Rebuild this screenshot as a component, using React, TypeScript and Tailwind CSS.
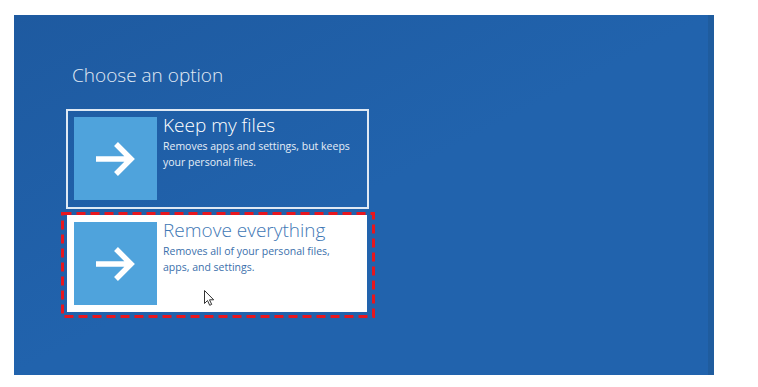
import React from 'react';

function ArrowTile() {
  return (
    <div className="w-[83px] h-[83px] shrink-0 bg-[#4fa3dc] flex items-center justify-center">
      <svg width="42" height="36" viewBox="0 0 42 36" fill="none">
        <path d="M1 18h35M21 3l15 15-15 15" stroke="white" strokeWidth="5.5" strokeLinejoin="miter" />
      </svg>
    </div>
  );
}

export default function App() {
  return (
    <div className="w-[758px] h-[387px] bg-white pt-[15px] pl-[14px] font-['Open_Sans','Noto_Sans',sans-serif]">
      <div className="relative w-[700px] h-[360px] bg-gradient-to-br from-[#1e5aa0] via-[#2163ad] to-[#2163ad] pl-[52px] pt-[47px]">
        {/* right edge shade */}
        <div className="absolute right-0 top-0 h-full w-[6px] bg-[#1f5c9e]" />

        <h1 className="ml-[6px] text-[19px] font-light text-[#e2ebf5] leading-[26px]">Choose an option</h1>

        <div className="mt-[21px] flex flex-col">
          {/* Keep my files */}
          <div className="w-[303px] h-[100px] border-2 border-[#dfe9f4] p-[6px] flex gap-[6px]">
            <ArrowTile />
            <div className="-mt-[3px]">
              <div className="text-[19px] font-light text-white leading-[22px]">Keep my files</div>
              <div className="mt-[2px] text-[10.5px] leading-[16px] text-[#e6eef7]">
                Removes apps and settings, but keeps
                <br />
                your personal files.
              </div>
            </div>
          </div>

          {/* Remove everything */}
          <div className="relative mt-[3px] -ml-[5px] w-[314px] h-[106px] pt-[3px] pl-[6px]">
            <svg className="absolute inset-0" width="314" height="106">
              <rect x="1.5" y="1.5" width="311" height="103" fill="none" stroke="#e8161e" strokeWidth="3" strokeDasharray="9 5" />
            </svg>
            <div className="relative w-[300px] h-[97px] bg-white p-[7px] flex gap-[6px]">
              <ArrowTile />
              <div className="-mt-[3px]">
                <div className="text-[19px] font-light text-[#3f78b5] leading-[22px]">Remove everything</div>
                <div className="mt-[2px] text-[10.5px] leading-[16px] text-[#3b6fab]">
                  Removes all of your personal files,
                  <br />
                  apps, and settings.
                </div>
              </div>
              <svg className="absolute left-[137px] top-[75px]" width="11" height="16" viewBox="0 0 11 16">
                <path d="M0.5 0.5v13l3-3 2.2 4.8 2-0.9-2.2-4.6h4.2z" fill="white" stroke="#333" strokeWidth="1" />
              </svg>
            </div>
          </div>
        </div>
      </div>
    </div>
  );
}
